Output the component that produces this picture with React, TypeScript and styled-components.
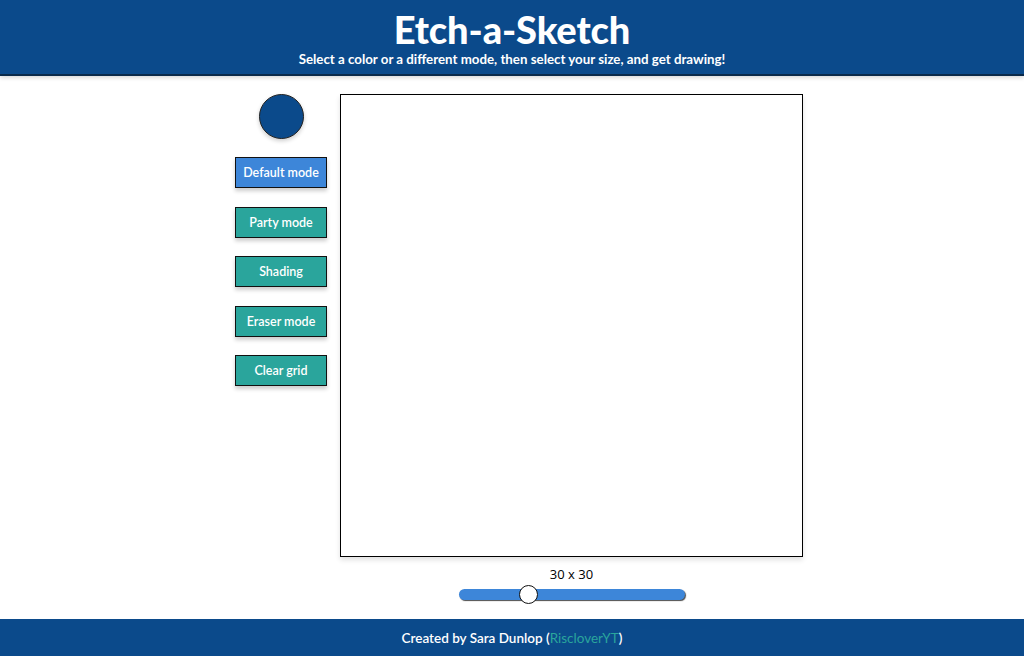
import React, { useState } from "react";
import styled, { createGlobalStyle } from "styled-components";

const Global = createGlobalStyle`
  html, body { margin: 0; padding: 0; }
  body { font-family: "Lato", "Open Sans", sans-serif; background: #fff; }
  #root { min-height: 656px; display: flex; flex-direction: column; }
`;

const Header = styled.header`
  background: #0b4a8b;
  color: #fff;
  height: 74px;
  border-bottom: 2px solid #0a2a4a;
  box-shadow: 0 2px 4px rgba(0,0,0,0.15);
  display: flex;
  flex-direction: column;
  align-items: center;
  box-sizing: content-box;
`;

const Title = styled.h1`
  margin: 8px 0 0;
  font-size: 38px;
  line-height: 42px;
  font-weight: 900;
  letter-spacing: -0.1px;
`;

const Subtitle = styled.p`
  margin: 1px 0 0;
  font-size: 13.3px;
  font-weight: 700;
`;

const Main = styled.main`
  flex: 1;
  display: flex;
  justify-content: center;
  gap: 13px;
  padding: 18px 0 0 14px;
`;

const Sidebar = styled.div`
  width: 92px;
  display: flex;
  flex-direction: column;
  align-items: center;
`;

const ColorDot = styled.div`
  width: 43px;
  height: 43px;
  border-radius: 50%;
  background: #0b4a8b;
  border: 1px solid #222;
  box-shadow: 0 2px 4px rgba(0,0,0,0.2);
  margin-bottom: 18px;
`;

const ModeButton = styled.button<{ $active?: boolean }>`
  width: 92px;
  height: 31px;
  margin-bottom: 18.5px;
  background: ${(p) => (p.$active ? "#3d86d9" : "#2aa59c")};
  color: #fff;
  border: 1px solid #111;
  box-shadow: 0 3px 4px rgba(0,0,0,0.2);
  font-family: "Lato", "Open Sans", sans-serif;
  font-size: 12.5px;
  font-weight: 600;
  padding: 0;
  cursor: pointer;
`;

const Board = styled.div`
  display: flex;
  flex-direction: column;
  align-items: center;
`;

const Grid = styled.div`
  width: 461px;
  height: 461px;
  border: 1px solid #000;
  background: #fff;
  box-shadow: 0 3px 5px rgba(0,0,0,0.12);
`;

const SizeLabel = styled.div`
  margin-top: 9px;
  font-family: "Open Sans", sans-serif;
  font-size: 13px;
  line-height: 16px;
  color: #000;
`;

const Range = styled.input`
  -webkit-appearance: none;
  appearance: none;
  width: 226px;
  height: 11px;
  margin: 7px 0 0;
  border-radius: 6px;
  background: #3d86d9;
  box-shadow: 1px 1px 1px rgba(0,0,0,0.7);
  outline: none;
  &::-webkit-slider-thumb {
    -webkit-appearance: none;
    appearance: none;
    width: 19px;
    height: 19px;
    border-radius: 50%;
    background: #fff;
    border: 1.5px solid #111;
    cursor: pointer;
  }
`;

const Footer = styled.footer`
  background: #0b4a8b;
  color: #fff;
  height: 37px;
  display: flex;
  align-items: center;
  justify-content: center;
  font-size: 13.5px;
  font-weight: 600;
`;

const Link = styled.a`
  color: #2aa59c;
  text-decoration: none;
  font-weight: 400;
`;

export default function App() {
  const [size, setSize] = useState(30);
  const [mode, setMode] = useState("Default mode");
  const modes = ["Default mode", "Party mode", "Shading", "Eraser mode", "Clear grid"];
  return (
    <>
      <Global />
      <Header>
        <Title>Etch-a-Sketch</Title>
        <Subtitle>Select a color or a different mode, then select your size, and get drawing!</Subtitle>
      </Header>
      <Main>
        <Sidebar>
          <ColorDot />
          {modes.map((m) => (
            <ModeButton key={m} $active={m === mode} onClick={() => setMode(m)}>
              {m}
            </ModeButton>
          ))}
        </Sidebar>
        <Board>
          <Grid />
          <SizeLabel>
            {size} x {size}
          </SizeLabel>
          <Range
            type="range"
            min={1}
            max={100}
            value={size}
            onChange={(e) => setSize(Number(e.target.value))}
          />
        </Board>
      </Main>
      <Footer>
        Created by Sara Dunlop (<Link href="#">RiscloverYT</Link>)
      </Footer>
    </>
  );
}
